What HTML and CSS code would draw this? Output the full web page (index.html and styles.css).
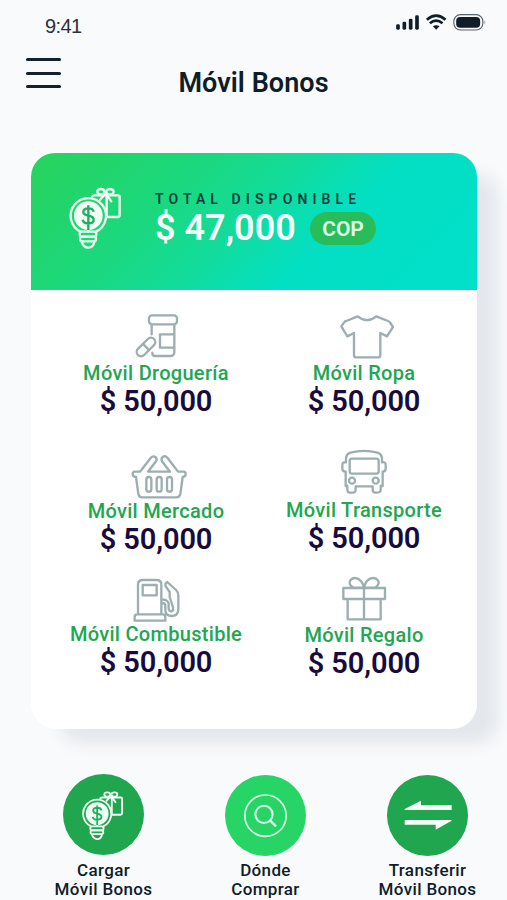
FILE: index.html
```html
<!DOCTYPE html>
<html lang="es">
<head>
<meta charset="utf-8">
<title>Móvil Bonos</title>
<link rel="stylesheet" href="styles.css">
</head>
<body>
<svg class="defs" aria-hidden="true">
  <symbol id="bulb" viewBox="144 140 162 192">
    <g fill="none" stroke="#effff3" stroke-width="7" stroke-linejoin="round" stroke-linecap="round">
      <path d="M216 172 Q218 168 224 168 H294 Q299 168 299 173 V227 Q299 233 293 233 H262 M260 170 V228"/>
      <ellipse cx="243" cy="157" rx="11" ry="8"/><ellipse cx="270" cy="157" rx="11" ry="8"/>
      <path d="M257 162 L240 181 M257 162 L274 186"/>
      <path d="M182 277 A53 53 0 1 1 228 277"/>
      <path d="M205 262 V276"/>
      <rect x="179" y="277" width="50" height="15" rx="7"/><rect x="180" y="292" width="48" height="14" rx="7"/>
      <path d="M185 307 Q190 325 205 325 Q220 325 223 307"/>
    </g>
    <circle cx="205" cy="229" r="43" fill="#effff3"/>
    <path class="dollar" d="M221 217 Q219 207 205 207 Q190 207 190 218 Q190 226 205 229 Q221 232 221 241 Q221 252 205 252 Q190 252 188 241 M205 198 V272" fill="none" stroke-width="7"/>
  </symbol>
</svg>
<div class="screen">
  <header class="status">
    <span class="time">9:41</span>
    <svg class="indicators" viewBox="1185 40 275 54">
      <g fill="#111d28"><rect x="1188" y="74" width="11" height="16" rx="4"/><rect x="1207" y="66" width="11" height="24" rx="4"/><rect x="1226" y="57" width="11" height="33" rx="4"/><rect x="1245" y="47" width="11" height="43" rx="4"/>
      <path d="M1298 80 Q1308 73 1318 80 L1308 90Z"/><rect x="1368" y="52" width="72" height="32" rx="12"/></g>
      <g fill="none" stroke="#111d28"><path d="M1280 60 Q1308 36 1336 60 M1289 71 Q1308 55 1327 71" stroke-width="8"/><rect x="1361" y="45" width="87" height="46" rx="20" stroke="#59636c" stroke-width="3.5"/></g>
      <path d="M1452 62 Q1459 68 1452 74Z" fill="#a5acb4"/>
    </svg>
  </header>
  <div class="titlebar">
    <div class="menu"><i></i><i></i><i></i></div>
    <h1>Móvil Bonos</h1>
  </div>
  <main class="card">
    <section class="total">
      <svg class="total-icon"><use href="#bulb"/></svg>
      <div class="total-text">
        <div class="caption">TOTAL DISPONIBLE</div>
        <div class="sum"><strong>$ 47,000</strong><span class="pill">COP</span></div>
      </div>
    </section>
    <section class="grid">
      <div class="cell">
        <svg class="icon" viewBox="198 21 180 144"><rect x="267" y="31" width="84" height="27" rx="9"/><path d="M275 59 V88 M343 59 V142 Q343 153 332 153 H286 Q277 153 277 143 M342 88 H300 V128 H342"/><g transform="rotate(-45 258 126)"><rect x="224" y="113" width="68" height="26" rx="13"/><path d="M258 113 V139"/></g></svg>
        <span class="name">Móvil Droguería</span><strong class="amount">$ 50,000</strong>
      </div>
      <div class="cell">
        <svg class="icon" viewBox="192 21 180 144"><path d="M263 34 Q291 57 319 34 L354 48 Q359 50 361 54 L369 66 L351 94 L331 84 V151 Q331 157 325 157 H258 Q252 157 252 151 V84 L232 94 L214 64 L222 53 Q224 49 229 48Z"/></svg>
        <span class="name">Móvil Ropa</span><strong class="amount">$ 50,000</strong>
      </div>
      <div class="cell low">
        <svg class="icon" viewBox="198 15 180 144"><path d="M224 80 H240 L272 39 Q279 31 286 36 Q293 41 288 49 L264 80 H330 L306 49 Q302 41 309 35 Q316 31 323 39 L354 80 H371 Q377 80 377 87 Q377 95 368 96 L361 147 Q359 157 349 157 H246 Q237 157 235 147 L228 96 Q218 95 218 87 Q218 80 224 80Z"/><rect x="259" y="96" width="15" height="44" rx="7.5"/><rect x="290" y="96" width="15" height="44" rx="7.5"/><rect x="321" y="96" width="15" height="44" rx="7.5"/></svg>
        <span class="name">Móvil Mercado</span><strong class="amount">$ 50,000</strong>
      </div>
      <div class="cell">
        <svg class="icon" viewBox="192 12 180 144"><path d="M228 52 V38 Q230 27 241 23 Q282 12 323 23 Q334 27 336 38 V52 Q347 49 347 61 V71 Q347 79 338 80 V123 H332 V135 Q332 143 319 143 Q308 143 308 134 V124 H257 V134 Q257 143 244 143 Q232 143 232 134 V123 H227 V80 Q217 79 217 71 V61 Q217 50 228 52Z"/><rect x="239" y="41" width="87" height="45" rx="7"/><circle cx="246" cy="107" r="9"/><circle cx="317" cy="107" r="9"/></svg>
        <span class="name">Móvil Transporte</span><strong class="amount">$ 50,000</strong>
      </div>
      <div class="cell">
        <svg class="icon" viewBox="198 9 180 144"><path d="M234 132 V44 Q234 30 248 30 H290 Q304 30 304 44 V132 M231 133 H309 Q316 133 316 142 V152 H224 V142 Q224 133 231 133Z M248 45 H290 V76 H248Z M305 89 Q322 87 326 101 V116 Q328 126 335 124 Q341 122 339 112 L329 81 V66 L317 49 Q314 39 322 36 L348 60 Q355 67 355 76 V117 Q355 137 337 138 Q318 139 316 122 V105 Q315 99 305 99"/></svg>
        <span class="name">Móvil Combustible</span><strong class="amount">$ 50,000</strong>
      </div>
      <div class="cell low">
        <svg class="icon" viewBox="192 12 180 144"><path d="M220 54 H345 V87 H220Z M233 87 V148 H332 V87 M282 54 V148 M282 53 H251 Q233 43 241 31 Q248 21 261 25 Q277 31 282 53 Q287 31 302 25 Q317 21 324 31 Q331 43 315 53 Z"/></svg>
        <span class="name">Móvil Regalo</span><strong class="amount">$ 50,000</strong>
      </div>
    </section>
  </main>
  <nav class="actions">
    <a class="action first"><span class="disc"><svg class="disc-bulb"><use href="#bulb"/></svg></span><span class="label">Cargar<br>Móvil Bonos</span></a>
    <a class="action"><span class="disc bright"><svg class="disc-icon" viewBox="0 0 243 243"><g fill="none" stroke="#dbffe8"><circle cx="121.500" cy="122" r="62" stroke-width="5"/><circle cx="117" cy="118" r="26" stroke-width="6"/><path d="M135 136 L153 154" stroke-width="7"/></g></svg></span><span class="label">Dónde<br>Comprar</span></a>
    <a class="action"><span class="disc"><svg class="disc-icon" viewBox="399 255 243 243" fill="#f4fff6"><path d="M452 357 L501 332 V346 H593 V360 H455 Q450 360 452 357Z M593 392 L545 419 V404 H452 V390 H590 Q595 390 593 392Z"/></svg></span><span class="label">Transferir<br>Móvil Bonos</span></a>
  </nav>
</div>
</body>
</html>
```
FILE: styles.css
```css
* { box-sizing: border-box; }
body { margin: 0; background: #f9fafc; color: #101d29; font-family: Roboto, "Liberation Sans", sans-serif; }
.defs { position: absolute; width: 0; height: 0; }
.screen { width: 507px; height: 900px; overflow: hidden; display: flex; flex-direction: column; }
.status { height: 54px; flex: none; display: flex; justify-content: space-between; align-items: flex-start; padding: 13px 20px 0 45px; }
.time { font: 20px/27px "Liberation Sans", sans-serif; letter-spacing: -0.6px; color: #26323c; }
.indicators { width: 92px; height: 18px; }
.titlebar { height: 99px; flex: none; display: grid; grid-template-columns: 35px 1fr 61px; padding: 4px 0 0 26px; }
.menu { display: flex; flex-direction: column; gap: 10.5px; }
.menu i { height: 3px; border-radius: 2px; background: #14212d; }
h1 { margin: 9px 0 0; text-align: center; font-size: 27px; line-height: 32px; font-weight: 600; letter-spacing: 0.05px; }
.card { width: 446px; height: 576px; flex: none; margin-left: 31px; border-radius: 25px; background: #fff; box-shadow: 25px 18px 16px -3px #e4e8ec; }
.total { height: 137px; border-radius: 24px 24px 0 0; display: flex; background: linear-gradient(135deg, #28d35c 0%, #1ad87f 32%, #12dc9c 48%, #03dfc3 65%, #01e0cb 100%); }
.total-icon { width: 54px; height: 64px; flex: none; margin: 33px 0 0 37px; }
.dollar { stroke: #1fae62; }
.total-text { padding: 38px 0 0 33px; }
.caption { font-size: 14px; line-height: 16px; font-weight: 600; letter-spacing: 5.1px; color: #073f38; white-space: nowrap; }
.sum { display: flex; align-items: center; gap: 15px; margin-top: 3px; }
.sum strong { width: 140px; white-space: nowrap; font-size: 36px; line-height: 36px; font-weight: 600; color: #f3fffb; }
.pill { width: 66px; height: 33px; border-radius: 17px; background: #28bd5b; color: #e0ffe9; font-size: 21px; line-height: 35px; font-weight: 600; text-align: center; }
.grid { display: grid; grid-template-columns: 208px 208px; grid-template-rows: 137px 124px 120px; padding: 22px 0 0 21px; }
.cell { display: flex; flex-direction: column; align-items: center; }
.low { padding-top: 1px; }
.icon { width: 60px; height: 48px; overflow: visible; fill: none; stroke: #9daeb0; stroke-width: 7; stroke-linejoin: round; stroke-linecap: round; }
.name { margin-top: 1px; font-size: 20px; line-height: 24px; font-weight: 500; color: #22a650; white-space: nowrap; letter-spacing: 0.3px; }
.amount { margin-top: 2px; font-size: 29px; line-height: 28px; font-weight: 600; letter-spacing: -0.1px; color: #180c3d; white-space: nowrap; }
.actions { display: flex; padding: 45px 0 0 22.5px; }
.action { width: 162px; flex: none; display: flex; flex-direction: column; align-items: center; padding-top: 1px; }
.first { padding-top: 0; }
.disc { width: 81px; height: 81px; border-radius: 50%; background: #20a64e; display: grid; place-items: center; }
.bright { background: #27d466; }
.disc-icon { width: 81px; height: 81px; }
.disc-bulb { width: 43px; height: 51px; margin: 2px 2px 0 0; }
.label { margin-top: 5px; font-size: 17px; line-height: 19px; font-weight: 500; text-align: center; letter-spacing: 0.35px; white-space: nowrap; }
.first .label { margin-top: 6px; }
```
